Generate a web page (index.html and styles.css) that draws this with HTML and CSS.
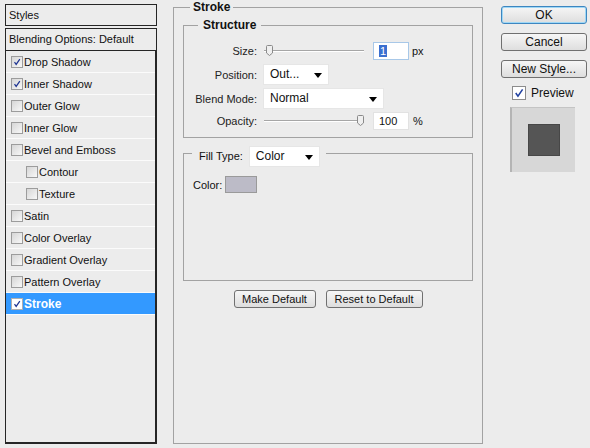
FILE: index.html
```html
<!DOCTYPE html>
<html>
<head>
<meta charset="utf-8">
<link rel="stylesheet" href="styles.css">
</head>
<body>
<div class="dialog">
  <div class="sidebar">
    <div class="box styles-head">Styles</div>
    <div class="box blend-head">Blending Options: Default</div>
    <div class="box list">
      <div class="row"><span class="cb"><svg viewBox="0 0 12 12"><path d="M3 6.2 L5 8.8 L9.4 2.6" /></svg></span>Drop Shadow</div>
      <div class="row"><span class="cb"><svg viewBox="0 0 12 12"><path d="M3 6.2 L5 8.8 L9.4 2.6" /></svg></span>Inner Shadow</div>
      <div class="row"><span class="cb"></span>Outer Glow</div>
      <div class="row"><span class="cb"></span>Inner Glow</div>
      <div class="row"><span class="cb"></span>Bevel and Emboss</div>
      <div class="row sub"><span class="cb"></span>Contour</div>
      <div class="row sub"><span class="cb"></span>Texture</div>
      <div class="row"><span class="cb"></span>Satin</div>
      <div class="row"><span class="cb"></span>Color Overlay</div>
      <div class="row"><span class="cb"></span>Gradient Overlay</div>
      <div class="row"><span class="cb"></span>Pattern Overlay</div>
      <div class="row active"><span class="cb white"><svg viewBox="0 0 12 12"><path d="M3 6.2 L5 8.8 L9.4 2.6" /></svg></span>Stroke</div>
    </div>
  </div>

  <div class="main">
    <fieldset class="group stroke">
      <legend class="title t-stroke">Stroke</legend>
      <fieldset class="group structure">
        <legend class="title t-structure">Structure</legend>
        <div class="fields">
          <div class="frow r-size">
            <span class="lbl">Size:</span>
            <span class="slider"><span class="track"></span><svg class="thumb thumb-left" viewBox="0 0 7 11"><path d="M1.5 0.5 H5.5 Q6.5 0.5 6.5 1.5 V8 L3.5 10.5 L0.5 8 V1.5 Q0.5 0.5 1.5 0.5 Z"/></svg></span>
            <span class="input focus"><span class="sel">1</span></span>
            <span class="unit">px</span>
          </div>
          <div class="frow r-pos">
            <span class="lbl">Position:</span>
            <span class="drop d-pos">Out...<i class="arrow"></i></span>
          </div>
          <div class="frow r-blend">
            <span class="lbl">Blend Mode:</span>
            <span class="drop d-blend">Normal<i class="arrow"></i></span>
          </div>
          <div class="frow r-op">
            <span class="lbl">Opacity:</span>
            <span class="slider"><span class="track"></span><svg class="thumb thumb-right" viewBox="0 0 7 11"><path d="M1.5 0.5 H5.5 Q6.5 0.5 6.5 1.5 V8 L3.5 10.5 L0.5 8 V1.5 Q0.5 0.5 1.5 0.5 Z"/></svg></span>
            <span class="input">100</span>
            <span class="unit pct">%</span>
          </div>
        </div>
      </fieldset>

      <fieldset class="group fill">
        <legend class="fill-legend"><span class="fill-lbl">Fill Type:</span><span class="drop d-fill">Color<i class="arrow"></i></span></legend>
        <div class="fill-body">
          <div class="color-row"><span>Color:</span><span class="swatch"></span></div>
        </div>
      </fieldset>

      <div class="btn-row">
        <button class="btn small">Make Default</button>
        <button class="btn small">Reset to Default</button>
      </div>
    </fieldset>
  </div>

  <div class="side">
    <button class="btn big ok">OK</button>
    <button class="btn big">Cancel</button>
    <button class="btn big">New Style...</button>
    <div class="preview-row"><span class="cb big-cb"><svg viewBox="0 0 14 14"><path d="M3.2 7 L5.8 10.6 L11.2 2.8" /></svg></span>Preview</div>
    <div class="preview"><div class="square"></div></div>
  </div>
</div>
</body>
</html>
```

FILE: styles.css
```css
* { box-sizing: border-box; }
html, body { margin: 0; padding: 0; }
body {
  width: 590px;
  height: 448px;
  overflow: hidden;
  background: #ececec;
  font-family: "Liberation Sans", Arial, sans-serif;
  font-size: 11px;
  color: #111;
}
.dialog { display: flex; align-items: flex-start; }

/* Sidebar */
.sidebar {
  margin: 4px 0 0 5px;
  width: 152px;
  height: 440px;
  display: flex;
  flex-direction: column;
}
.box {
  border: 1px solid #262626;
  background: #ececec;
}
.styles-head { height: 22px; line-height: 20px; padding-left: 3px; }
.blend-head { margin-top: 2px; height: 23px; line-height: 21px; padding-left: 3px; }
.list { flex: 1; border-top: none; border-bottom-width: 2px; border-right-width: 2px; }
.row {
  height: 22px;
  border-bottom: 1px solid #fbfbfb;
  display: flex;
  align-items: center;
  padding-left: 5px;
  white-space: nowrap;
}
.row.sub { padding-left: 20px; }
.row.active { background: #3399ff; color: #fff; font-weight: bold; font-size: 12px; }
.cb {
  width: 12px;
  height: 12px;
  flex: none;
  margin-right: 1px;
  border: 1px solid #9c9c9c;
  background: linear-gradient(135deg, #d6d6d6, #f8f8f8);
  display: inline-flex;
}
.cb.white { background: #fff; border-color: #b0b0b0; }
.cb svg { width: 10px; height: 10px; }
.cb path { fill: none; stroke: #1f3592; stroke-width: 1.5; }

/* Main */
.main { margin-left: 16px; width: 310px; }
.group {
  margin: 0;
  padding: 0;
  border: 1px solid #a2a2a2;
  min-width: 0;
}
.stroke { height: 444px; }
.title {
  font-weight: bold;
  font-size: 12px;
  line-height: 14px;
  height: 14px;
  color: #111;
}
.t-stroke { margin-left: 16px; padding: 0 3px; }
.structure { margin: 4px 9px 0 9px; }
.t-structure { margin-left: 14px; padding: 0 5px; }
.fields { padding: 10px 0 7px 0; }
.frow { display: flex; align-items: center; }
.r-size { height: 18px; }
.r-pos { height: 21px; margin-top: 4px; }
.r-blend { height: 21px; margin-top: 3px; }
.r-op { height: 18px; margin-top: 3px; }
.lbl { width: 73px; text-align: right; flex: none; color: #222; }
.slider {
  position: relative;
  width: 100px;
  height: 12px;
  margin-left: 7px;
  flex: none;
  display: flex;
  align-items: center;
}
.track {
  display: block;
  width: 100%;
  height: 2px;
  border-top: 1px solid #a6a6a6;
  border-bottom: 1px solid #fff;
}
.thumb { position: absolute; top: 0; width: 7px; height: 11px; }
.thumb path { fill: #efefef; stroke: #8a8a8a; stroke-width: 1; }
.thumb-left { left: 2px; }
.thumb-right { right: 0; }
.input {
  width: 36px;
  height: 18px;
  margin-left: 9px;
  background: #fff;
  border: 1px solid #e2e2e2;
  padding-left: 5px;
  line-height: 16px;
  font-size: 11px;
  flex: none;
}
.input.focus { border-color: #a8c8e8; }
.sel { background: #3a6fd0; color: #fff; padding: 0 1px; }
.unit { margin-left: 3px; }
.unit.pct { margin-left: 4px; }
.drop {
  position: relative;
  height: 21px;
  background: #fff;
  border: 1px solid #e6e6e6;
  font-size: 12px;
  line-height: 19px;
  padding-left: 6px;
  margin-left: 6px;
  flex: none;
}
.d-pos { width: 66px; }
.d-blend { width: 121px; }
.arrow {
  position: absolute;
  right: 6px;
  top: 8px;
  width: 0;
  height: 0;
  border-left: 4.5px solid transparent;
  border-right: 4.5px solid transparent;
  border-top: 5px solid #000;
}

/* Fill */
.fill { margin: 8px 9px 0 9px; }
.fill-legend {
  margin-left: 8px;
  padding: 0 6px 0 7px;
  height: 14px;
  display: flex;
  align-items: flex-start;
  overflow: visible;
}
.fill-lbl { line-height: 14px; margin-top: 3px; }
.d-fill { width: 71px; margin-top: 0; height: 21px; }
.fill-body { height: 120px; padding: 16px 0 0 9px; }
.color-row { display: flex; align-items: center; height: 17px; }
.swatch {
  width: 32px;
  height: 17px;
  margin-left: 3px;
  background: #bcbbc7;
  border: 1px solid #9a9a9a;
}

/* Buttons */
.btn-row { display: flex; justify-content: center; gap: 10px; margin-top: 9px; }
.btn {
  font-family: "Liberation Sans", Arial, sans-serif;
  color: #111;
  border: 1px solid #707070;
  border-radius: 3px;
  background: linear-gradient(#f6f6f6, #dedede);
  padding: 0;
  margin: 0;
}
.btn.small { height: 18px; font-size: 11px; }
.btn-row .btn:first-child { width: 82px; }
.btn-row .btn:last-child { width: 97px; }

.side { margin-left: 18px; width: 86px; display: flex; flex-direction: column; margin-top: 6px; }
.btn.big { height: 18px; width: 86px; font-size: 12px; margin-top: 9px; }
.btn.big.ok {
  margin-top: 0;
  border-color: #3d86c0;
  box-shadow: inset 0 0 0 1px #9fd8f6;
}
.preview-row { display: flex; align-items: center; margin: 8px 0 0 11px; font-size: 12px; height: 14px; }
.big-cb { width: 14px; height: 14px; margin-right: 5px; background: #fff; border-color: #8c8c8c; }
.big-cb svg { width: 12px; height: 12px; }
.big-cb path { stroke-width: 1.8; stroke: #2040a0; }
.preview {
  margin: 7px 0 0 9px;
  width: 65px;
  height: 65px;
  background: #d7d7d7;
  border-left: 2px solid #b4b4b4;
  border-top: 1px solid #c4c4c4;
  display: flex;
  align-items: center;
  justify-content: center;
}
.square { width: 32px; height: 32px; background: #555; border: 1px solid #474747; }
```
